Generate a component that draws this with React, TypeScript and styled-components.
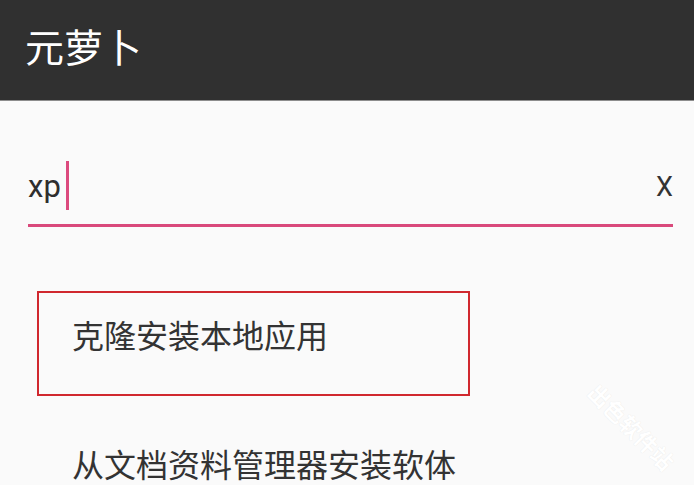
import React from "react";
import styled, { createGlobalStyle } from "styled-components";

const GlobalStyle = createGlobalStyle`
  html, body {
    margin: 0;
    padding: 0;
    background: #fafafa;
  }
  body {
    font-family: Roboto, "Noto Sans CJK SC", sans-serif;
    overflow: hidden;
  }
`;

const Screen = styled.div`
  position: relative;
  width: 694px;
  height: 485px;
  overflow: hidden;
  background: #fafafa;
  display: flex;
  flex-direction: column;
`;

const TopBar = styled.header`
  height: 101px;
  flex-shrink: 0;
  box-sizing: border-box;
  background: #303030;
  border-bottom: 1px solid #8d8d8d;
  display: flex;
  align-items: flex-start;
  padding: 26px 0 0 25px;
`;

const Title = styled.h1`
  margin: 0;
  font-family: "Noto Sans CJK SC", sans-serif;
  font-weight: 400;
  font-size: 39px;
  line-height: 39px;
  color: #ffffff;
`;

const Content = styled.main`
  display: flex;
  flex-direction: column;
  padding: 60px 21px 0 28px;
`;

const SearchField = styled.div`
  display: flex;
  flex-direction: column;
`;

const InputRow = styled.div`
  display: flex;
  align-items: flex-start;
  height: 49px;
`;

const InputText = styled.span`
  font-family: Roboto, sans-serif;
  font-size: 31px;
  line-height: 52px;
  color: #2e2e2e;
`;

const Caret = styled.span`
  width: 3px;
  height: 49px;
  margin-left: 5px;
  background: #dc4a7e;
`;

const ClearButton = styled.span`
  margin-left: auto;
  font-family: Roboto, sans-serif;
  font-size: 27px;
  line-height: 52px;
  color: #333333;
`;

const Underline = styled.div`
  margin-top: 14px;
  height: 3px;
  background: #d9497b;
`;

const ItemList = styled.ul`
  list-style: none;
  margin: 64px 0 0 0;
  padding: 0;
  display: flex;
  flex-direction: column;
  gap: 24px;
`;

const Item = styled.li<{ $marked?: boolean }>`
  font-family: "Noto Sans CJK SC", sans-serif;
  font-size: 32px;
  line-height: 32px;
  color: #333333;
  margin-left: 9px;
  width: 433px;
  box-sizing: border-box;
  border: 2.5px solid ${(p) => (p.$marked ? "#d0282e" : "transparent")};
  padding: 25px 0 44px 33px;
`;

const Watermark = styled.div`
  position: absolute;
  left: 572px;
  top: 414px;
  width: 120px;
  text-align: center;
  transform: rotate(45deg);
  font-family: "Noto Sans CJK SC", sans-serif;
  font-size: 22px;
  line-height: 24px;
  font-weight: 700;
  color: #ffffff;
  text-shadow: 0 0 1px rgba(0, 0, 0, 0.1);
  pointer-events: none;
`;

export default function App() {
  return (
    <Screen>
      <GlobalStyle />
      <TopBar>
        <Title>元萝卜</Title>
      </TopBar>
      <Content>
        <SearchField>
          <InputRow>
            <InputText>xp</InputText>
            <Caret />
            <ClearButton>X</ClearButton>
          </InputRow>
          <Underline />
        </SearchField>
        <ItemList>
          <Item $marked>克隆安装本地应用</Item>
          <Item>从文档资料管理器安装软体</Item>
        </ItemList>
      </Content>
      <Watermark>出色软件站</Watermark>
    </Screen>
  );
}
